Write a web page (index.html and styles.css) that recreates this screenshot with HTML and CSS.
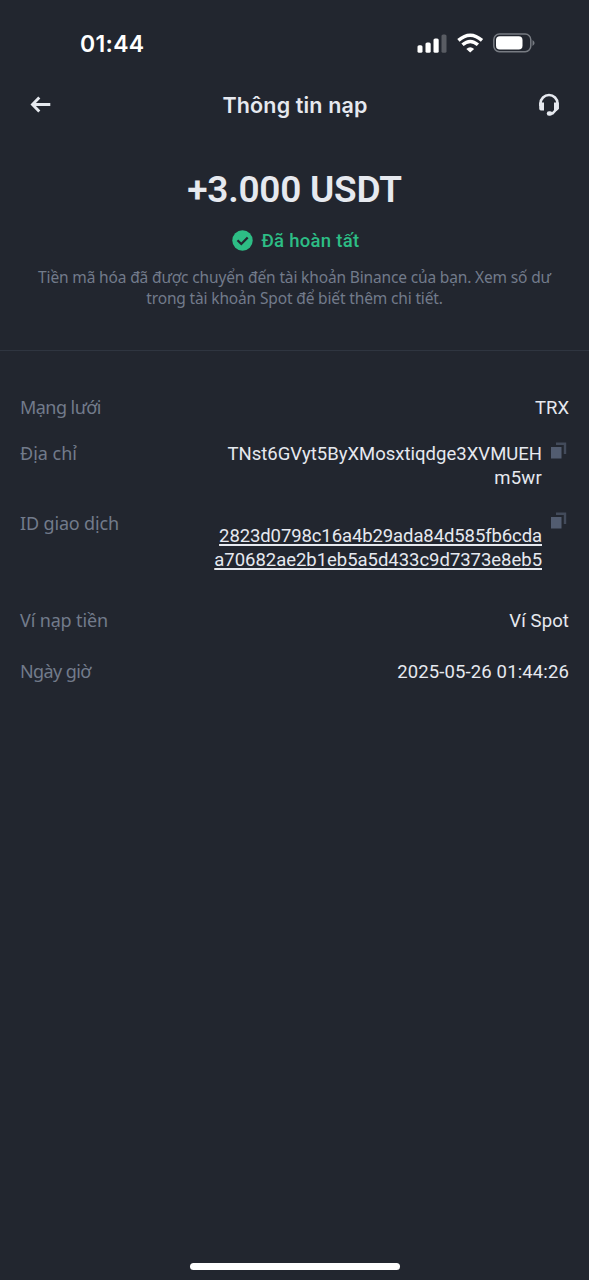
FILE: index.html
```html
<!DOCTYPE html>
<html lang="vi">
<head>
<meta charset="utf-8">
<title>Thông tin nạp</title>
<link rel="stylesheet" href="styles.css">
</head>
<body>
<div class="screen">
  <div class="status">
    <span class="clock">01:44</span>
    <svg class="indicators" width="120" height="24" viewBox="0 0 120 24">
      <g fill="#fff">
        <rect x="0.500" y="13.2" width="5" height="7.6" rx="1.6"/>
        <rect x="8.500" y="10.5" width="5.2" height="10.3" rx="1.6"/>
        <rect x="16.500" y="6.500" width="5.2" height="14.3" rx="1.6"/>
        <rect x="24.500" y="2.500" width="5" height="18.3" rx="1.6" opacity=".25"/>
      </g>
      <g fill="none" stroke="#fff" stroke-width="3.4">
        <path d="M41.400 8.400Q53.2-2 65 8.400"/>
        <path d="M45.500 12.800Q53.2 6 60.900 12.800"/>
      </g>
      <path fill="#fff" d="M53.2 20.600l-3.900-3.700q3.9-3.400 7.800 0z"/>
      <rect x="76.8" y="2.1" width="37" height="17.6" rx="5.6" fill="none" stroke="#777b82" stroke-width="1.5"/>
      <rect x="79" y="4.300" width="26.5" height="13.2" rx="3.8" fill="#fff"/>
      <path d="M115.500 7.900q4.2 3 0 6z" fill="#777b82"/>
    </svg>
  </div>
  <header class="bar">
    <svg width="22" height="18" viewBox="0 0 22 18" fill="none" stroke="#e6e9ef" stroke-width="2.900"><path d="M20.300 8.500H3M9.300 1.500L2.500 8.500l6.800 7"/></svg>
    <h1 class="title">Thông tin nạp</h1>
    <svg width="22" height="24" viewBox="0 0 22 24"><path d="M2.500 13V10.500A8.500 8.500 0 0 1 19.500 10.500V15L14.500 20.500H12" fill="none" stroke="#e6e9ef" stroke-width="2.600"/><path d="M1.200 9.500H6V17.500H3Q1.200 17.500 1.200 15.500zM16 9.500H20.800V16L19 17.500H16z" fill="#e6e9ef"/><rect x="8.800" y="18.300" width="5.500" height="4.400" rx="2.200" fill="#e6e9ef"/></svg>
  </header>
  <section class="summary">
    <div class="amount">+3.000 USDT</div>
    <div class="state">
      <svg width="21" height="21" viewBox="0 0 21 21"><circle cx="10.500" cy="10.500" r="10.200" fill="#2dbd85"/><path d="M5.500 10.300l3.800 3.700 6.400-6.500" fill="none" stroke="#22262f" stroke-width="2.300"/></svg>
      <span class="done">Đã hoàn tất</span>
    </div>
    <p class="note">Tiền mã hóa đã được chuyển đến tài khoản Binance của bạn. Xem số dư<br>trong tài khoản Spot để biết thêm chi tiết.</p>
  </section>
  <dl class="details">
    <div class="row network"><dt>Mạng lưới</dt><dd>TRX</dd></div>
    <div class="row address"><dt>Địa chỉ</dt><dd>TNst6GVyt5ByXMosxtiqdge3XVMUEH<br><span class="tail">m5wr</span></dd>
      <svg class="copy" width="16" height="18" viewBox="0 0 16 18"><path d="M5 1.800H14V12" fill="none" stroke="#434b5b" stroke-width="2.400"/><rect x="0" y="5" width="10.500" height="11.500" fill="#525c70"/></svg></div>
    <div class="row txid"><dt>ID giao dịch</dt><dd class="hash"><span class="hash-start">2823d0798c16a4b29ada84d585fb6cda</span><br><span class="hash-end">a70682ae2b1eb5a5d433c9d7373e8eb5</span></dd>
      <svg class="copy" width="16" height="18" viewBox="0 0 16 18"><path d="M5 1.800H14V12" fill="none" stroke="#434b5b" stroke-width="2.400"/><rect x="0" y="5" width="10.500" height="11.500" fill="#525c70"/></svg></div>
    <div class="row wallet"><dt>Ví nạp tiền</dt><dd>Ví Spot</dd></div>
    <div class="row date"><dt>Ngày giờ</dt><dd>2025-05-26 01:44:26</dd></div>
  </dl>
  <div class="home"></div>
</div>
</body>
</html>
```
FILE: styles.css
```css
* { box-sizing: border-box; }
body { margin: 0; background: #22262f; }
.screen { width: 589px; height: 1280px; display: flex; flex-direction: column; background: #22262f; color: #e6e9ef; font-family: Roboto, "Noto Sans", sans-serif; }
.status { height: 80px; padding: 32px 52px 0 80px; display: flex; justify-content: space-between; align-items: flex-start; }
.clock { font: 600 23px/24px Inter, sans-serif; letter-spacing: 0.3px; color: #fff; }
.bar { height: 50px; padding: 0 29px 0 30px; display: flex; align-items: center; justify-content: space-between; }
.title { margin: 0; font: 600 21.5px/30px Inter, sans-serif; letter-spacing: 0.15px; }
.summary { height: 221px; padding-top: 37px; border-bottom: 1px solid #2f3540; display: flex; flex-direction: column; align-items: center; }
.amount { font-size: 37px; line-height: 46px; font-weight: 600; letter-spacing: -0.25px; white-space: nowrap; }
.state { height: 26px; margin-top: 14px; padding-left: 3px; display: flex; align-items: center; gap: 8px; font-size: 18.5px; font-weight: 500; letter-spacing: 0.3px; color: #2dbd85; }
.done { padding-top: 2px; }
.note { margin: 14px 0 0; font: 15.5px/20.5px "Noto Sans", sans-serif; letter-spacing: -0.15px; color: #727b8b; text-align: center; white-space: nowrap; }
.details { margin: 0; padding: 44px 20px 0; font-size: 18.5px; line-height: 24px; flex: 1; }
.row { display: flex; align-items: flex-start; white-space: nowrap; }
.row dt { color: #727b8b; font-family: "Noto Sans", sans-serif; font-size: 18px; letter-spacing: -0.15px; }
.row dd { margin: 0 0 0 auto; padding-top: 1px; text-align: right; }
.network { height: 46px; }
.network dt { letter-spacing: -0.55px; }
.address { height: 70px; }
.address dt { letter-spacing: 0; }
.tail { letter-spacing: 0.25px; }
.txid { height: 97px; }
.wallet { height: 51px; }
.wallet dd { letter-spacing: 0.12px; }
.date dt { letter-spacing: -0.6px; }
.date dd { letter-spacing: 0.13px; }
.copy { margin: 1px 2px 0 9px; }
.txid .hash { padding-top: 13px; text-decoration: underline; text-underline-offset: 2px; text-decoration-thickness: 1.5px; }
.hash-start { letter-spacing: -0.1px; }
.hash-end { letter-spacing: -0.03px; }
.home { width: 210px; height: 7px; margin: 0 auto 10px; border-radius: 4px; background: #fff; }
```
